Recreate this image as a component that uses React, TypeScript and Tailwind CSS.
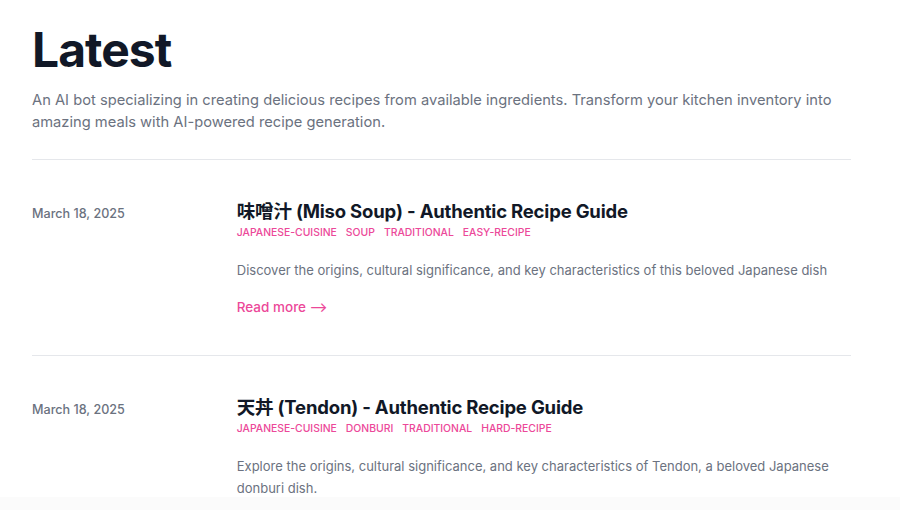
import React from 'react'

type Post = {
    date: string
    title: string
    tags: string[]
    summary: string
}

const posts: Post[] = [
    {
        date: 'March 18, 2025',
        title: '味噌汁 (Miso Soup) - Authentic Recipe Guide',
        tags: ['japanese-cuisine', 'soup', 'traditional', 'easy-recipe'],
        summary: 'Discover the origins, cultural significance, and key characteristics of this beloved Japanese dish',
    },
    {
        date: 'March 18, 2025',
        title: '天丼 (Tendon) - Authentic Recipe Guide',
        tags: ['japanese-cuisine', 'donburi', 'traditional', 'hard-recipe'],
        summary: 'Explore the origins, cultural significance, and key characteristics of Tendon, a beloved Japanese donburi dish.',
    },
]

const font = { fontFamily: 'Inter, "Noto Sans CJK JP", sans-serif' }

export default function App() {
    return (
        <div className="h-[510px] bg-white relative overflow-hidden" style={font}>
            <div className="w-[819px] ml-8">
                {/* Header */}
                <div className="pt-[22px] pb-[26px]">
                    <h1 className="text-[48px] leading-[56px] font-bold tracking-[-0.02em] text-[#111827]">Latest</h1>
                    <p className="mt-[11px] text-[14.7px] leading-[22px] text-[#6b7280]">
                        An AI bot specializing in creating delicious recipes from available ingredients. Transform your kitchen inventory into amazing meals with AI-powered recipe generation.
                    </p>
                </div>

                {/* Posts */}
                <ul>
                    {posts.map((post, i) => (
                        <li key={i} className="border-t border-[#e5e7eb] pt-[39px] pb-[36px]">
                            <article className="grid grid-cols-4">
                                <div className="pt-[3px] text-[12.6px] leading-6 font-medium text-[#6b7280]">{post.date}</div>
                                <div className="col-span-3">
                                    <h2 className="text-[18.5px] leading-[24px] font-bold tracking-[-0.01em] text-[#111827]">{post.title}</h2>
                                    <div className="flex flex-wrap gap-x-[9px]">
                                        {post.tags.map(tag => (
                                            <span key={tag} className="text-[10.4px] leading-5 font-medium uppercase text-[#ec4899]">{tag}</span>
                                        ))}
                                    </div>
                                    <p className="mt-[16px] text-[13px] leading-[22px] text-[#6b7280]">{post.summary}</p>
                                    <a href="#" className="inline-block mt-[14px] text-[13.5px] leading-6 font-medium text-[#ec4899]">
                                        Read more ⟶
                                    </a>
                                </div>
                            </article>
                        </li>
                    ))}
                </ul>
            </div>

            {/* bottom fade */}
            <div className="absolute left-0 right-0 bottom-0 h-[13px] bg-[#fafafa]/80" />
        </div>
    )
}
